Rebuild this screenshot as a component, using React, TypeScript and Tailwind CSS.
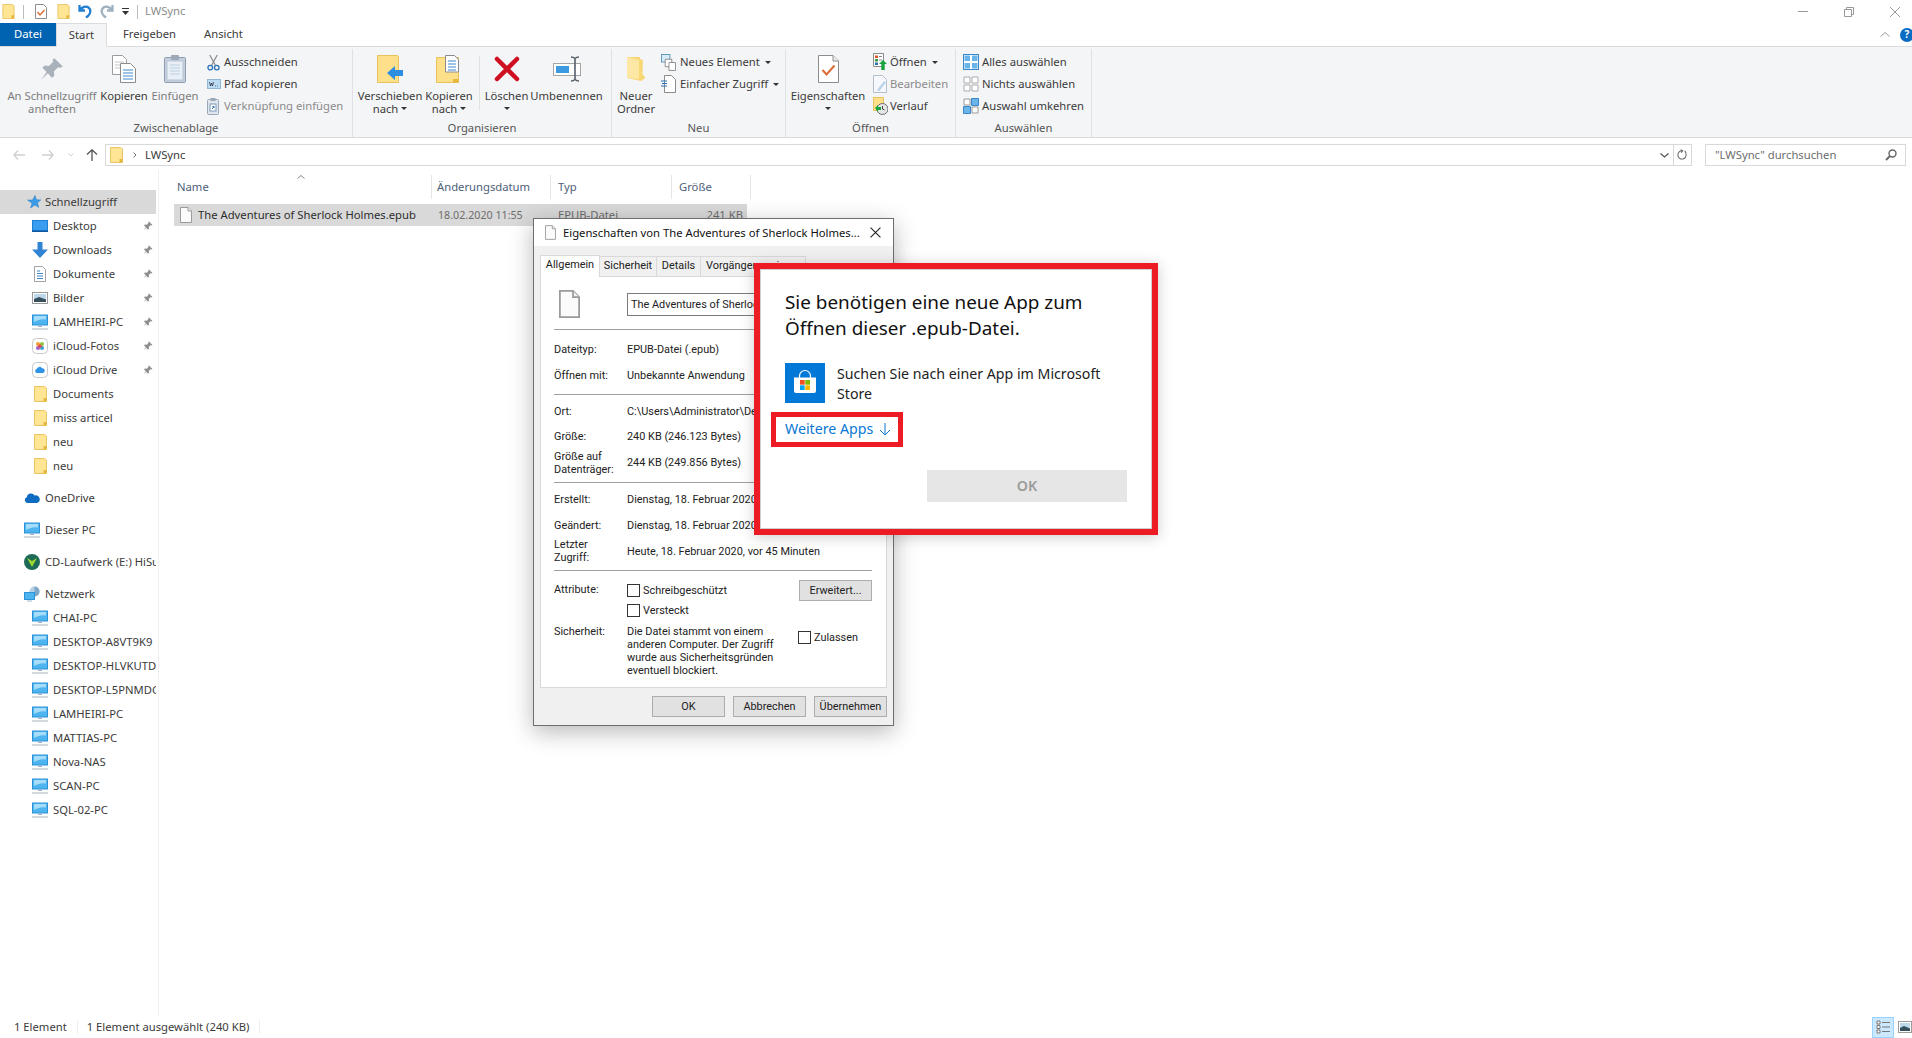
import type { ReactNode } from "react";

const ink = "text-[#3b3b3b]";

function Folder({ className = "w-[13px] h-[16px]" }: { className?: string }) {
  return (
    <svg viewBox="0 0 13 16" className={className}>
      <path d="M.5.5h10L12.5 2v13.5H.5z" fill="#ffe594" stroke="#eac566" />
      <path d="M9.5 15.5V12h3v3.5z" fill="#e6b73c" />
    </svg>
  );
}

function Sheet({ className = "w-[12px] h-[16px]" }: { className?: string }) {
  return (
    <svg viewBox="0 0 12 16" className={`shrink-0 ${className}`}>
      <path d="M.5.5h7.5l3.5 3.5v11.5H.5z" fill="#fbfbfb" stroke="#9b9b9b" />
      <path d="M8 .5V4h3.5" fill="#f1f1f1" stroke="#9b9b9b" />
    </svg>
  );
}

function Monitor() {
  return (
    <svg viewBox="0 0 16 16" className="w-4 h-4">
      <rect x=".5" y="1" width="15" height="10" fill="#4db4f0" stroke="#2c93d8" />
      <path d="M2 2h12v3.5C9 4.5 5 6.5 2 8z" fill="#a5dcfa" />
      <path d="M6 11.5h4v1.5H6z" fill="#9fb6c6" />
      <path d="M0 14.5h16v1H0z" fill="#a9b3bb" />
    </svg>
  );
}

function Pin({ className = "w-[10px] h-[10px]", color = "#8e8e8e" }: { className?: string; color?: string }) {
  return (
    <svg viewBox="0 0 20 20" className={className}>
      <path d="M12 1l7 7-2 1-2-.5-3.5 3.5.5 3.5-2 2-3.5-4L1 19l4.5-6.5L2 9l2-2 3.5.5L11 4l-.5-2z" fill={color} />
    </svg>
  );
}

function Star() {
  return (
    <svg viewBox="0 0 14 14" className="w-[14px] h-[14px]">
      <path d="M8 .5l1.5 4.2 4.3.2-3.3 2.9 1.2 4.6L8 10l-4.5 3 1.5-4.8L.5 5h5z" fill="#3a9be6" stroke="#2d7fc4" strokeWidth=".5" />
    </svg>
  );
}

function Cloud({ color = "#0f6cc0" }: { color?: string }) {
  return (
    <svg viewBox="0 0 16 10" className="w-4 h-[10px]">
      <path d="M3.5 10A3 3 0 0 1 2.8 4.2 4.2 4.2 0 0 1 10.6 2.6 3.7 3.7 0 0 1 13 10z" fill={color} />
    </svg>
  );
}

const sideIcons: Record<string, ReactNode> = {
  Desktop: (
    <svg viewBox="0 0 16 12" className="w-4 h-3">
      <rect width="16" height="12" fill="#1a7fd8" />
      <rect x="1" y="1" width="14" height="9" fill="#3b9df0" />
      <path d="M0 10.5h16V12H0z" fill="#0f5a9e" />
    </svg>
  ),
  Downloads: (
    <svg viewBox="0 0 16 16" className="w-4 h-4">
      <path d="M5.5 0h5v7.5H16L8 16 0 7.5h5.5z" fill="#2f85d4" />
    </svg>
  ),
  Dokumente: (
    <svg viewBox="0 0 12 16" className="w-3 h-4">
      <path d="M.5.5h8l3 3v12H.5z" fill="#fff" stroke="#a3a3a3" />
      <path d="M3 5h3M3 7.5h6M3 10h6M3 12.5h6" stroke="#3f86c8" />
    </svg>
  ),
  Bilder: (
    <svg viewBox="0 0 16 12" className="w-4 h-3">
      <rect x=".5" y=".5" width="15" height="11" fill="#fff" stroke="#9a9a9a" />
      <rect x="2" y="2" width="12" height="8" fill="#bcd9ea" />
      <path d="M2 7l5-2 7 2.5V10H2z" fill="#35505c" />
    </svg>
  ),
  "iCloud-Fotos": (
    <svg viewBox="0 0 16 16" className="w-4 h-4">
      <rect x=".5" y=".5" width="15" height="15" rx="4" fill="#fff" stroke="#c8c8c8" />
      <circle cx="6" cy="6" r="2" fill="#f0a030" />
      <circle cx="10" cy="6" r="2" fill="#8cc63f" />
      <circle cx="6" cy="10" r="2" fill="#a55fc9" />
      <circle cx="10" cy="10" r="2" fill="#3f9ad6" />
      <circle cx="8" cy="8" r="1.8" fill="#e4473f" />
    </svg>
  ),
  "iCloud Drive": (
    <svg viewBox="0 0 16 16" className="w-4 h-4">
      <rect x=".5" y=".5" width="15" height="15" rx="4" fill="#fff" stroke="#c8c8c8" />
      <path d="M5 11a2 2 0 0 1-.4-3.9A3 3 0 0 1 10 6.2 2.5 2.5 0 0 1 11.2 11z" fill="#2d93e8" />
    </svg>
  ),
};

const quickAccess = ["Desktop", "Downloads", "Dokumente", "Bilder", "LAMHEIRI-PC", "iCloud-Fotos", "iCloud Drive"];
const quickFolders = ["Documents", "miss articel", "neu", "neu"];
const network = ["CHAI-PC", "DESKTOP-A8VT9K9", "DESKTOP-HLVKUTD", "DESKTOP-L5PNMDG", "LAMHEIRI-PC", "MATTIAS-PC", "Nova-NAS", "SCAN-PC", "SQL-02-PC"];

function SideRow({ icon, label, pin, indent }: { icon: ReactNode; label: string; pin?: boolean; indent?: boolean }) {
  return (
    <div className={`flex h-6 items-center ${indent ? "pl-8" : "pl-6"}`}>
      <span className="flex w-4 shrink-0 justify-center">{icon}</span>
      <span className={`ml-[5px] min-w-0 flex-1 overflow-hidden whitespace-nowrap text-[11.25px] ${ink}`}>{label}</span>
      {pin && (
        <span className="mr-[3px] shrink-0">
          <Pin />
        </span>
      )}
    </div>
  );
}

function Caret({ className = "" }: { className?: string }) {
  return (
    <svg viewBox="0 0 6 3" className={`inline-block h-[3px] w-[6px] ${className}`}>
      <path d="M0 0h6L3 3z" fill="#333" />
    </svg>
  );
}

function LargeBtn({
  w,
  icon,
  lines,
  caret,
  muted,
}: {
  w: string;
  icon: ReactNode;
  lines: string[];
  caret?: boolean;
  muted?: boolean;
}) {
  return (
    <div className={`flex shrink-0 flex-col items-center ${w}`}>
      <div className="flex h-[40px] items-center justify-center">{icon}</div>
      <div className={`text-center text-[11.25px] leading-[13px] whitespace-nowrap ${muted ? "text-[#7c7c7c]" : ink}`}>
        {lines.map((l, i) => (
          <div key={i}>
            {l}
            {caret && lines.length > 1 && i === lines.length - 1 && <Caret className="mb-[2px] ml-[3px]" />}
          </div>
        ))}
        {caret && lines.length === 1 && (
          <div className="flex h-[13px] items-center justify-center">
            <Caret />
          </div>
        )}
      </div>
    </div>
  );
}

function SmallBtn({
  icon,
  label,
  box,
  muted,
  caret,
}: {
  icon: ReactNode;
  label: string;
  box: string;
  muted?: boolean;
  caret?: boolean;
}) {
  return (
    <div className="flex h-[22px] items-center">
      <span className={`flex shrink-0 justify-start ${box}`}>{icon}</span>
      <span className={`whitespace-nowrap text-[11.25px] ${muted ? "text-[#8b8b8b]" : ink}`}>{label}</span>
      {caret && <Caret className="ml-[5px]" />}
    </div>
  );
}

function Group({ w, label, children }: { w: string; label: string; children: ReactNode }) {
  return (
    <div className={`flex h-[88px] shrink-0 flex-col border-r border-[#dfe1e3] ${w}`}>
      <div className="flex h-[73px]">{children}</div>
      <div className="flex h-[13px] items-center justify-center text-[11.25px] text-[#555]">{label}</div>
    </div>
  );
}

function CopyPages() {
  return (
    <svg viewBox="0 0 24 28" className="h-[28px] w-[24px]">
      <path d="M.5.5h10l4 4v15H.5z" fill="#fff" stroke="#9c9c9c" />
      <path d="M3 7h9M3 10h9M3 13h9" stroke="#c2c2c2" />
      <path d="M8.5 8.5h10l5 5v14h-15z" fill="#fff" stroke="#8b8b8b" />
      <path d="M11 15h10M11 18h10M11 21h10M11 24h10" stroke="#3f86c8" />
    </svg>
  );
}

function StoreBag() {
  return (
    <svg viewBox="0 0 40 40" className="h-10 w-10 shrink-0">
      <rect width="40" height="40" fill="#0078d7" />
      <path d="M14.5 15v-2a5.500 5.500 0 0 1 11 0v2" fill="none" stroke="#fff" strokeWidth="1.200" />
      <path d="M9 14.500h22V28a2 2 0 0 1-2 2H11a2 2 0 0 1-2-2z" fill="#fff" />
      <rect x="15" y="17" width="4.700" height="4.700" fill="#f25022" />
      <rect x="20.300" y="17" width="4.700" height="4.700" fill="#7fba00" />
      <rect x="15" y="22.300" width="4.700" height="4.700" fill="#00a4ef" />
      <rect x="20.300" y="22.300" width="4.700" height="4.700" fill="#ffb900" />
    </svg>
  );
}

function Ribbon() {
  return (
    <div className="flex h-[92px] shrink-0 border-y border-[#dadbdc] bg-[#f4f5f7] pt-[2px]">
      <Group w="w-[353px]" label="Zwischenablage">
        <div className="w-[6px]" />
        <LargeBtn
          w="w-[92px]"
          muted
          lines={["An Schnellzugriff", "anheften"]}
          icon={<Pin className="h-[24px] w-[24px]" color="#a9b1bb" />}
        />
        <LargeBtn w="w-[52px]" lines={["Kopieren"]} icon={<CopyPages />} />
        <LargeBtn
          w="w-[50px]"
          muted
          lines={["Einfügen"]}
          icon={
            <svg viewBox="0 0 22 28" className="h-[28px] w-[22px]">
              <rect x=".5" y="2.500" width="21" height="25" rx="1" fill="#c3cfdc" stroke="#8d9cae" />
              <rect x="3" y="6" width="16" height="19" fill="#e8eff6" stroke="#b7c4d2" />
              <path d="M6 10h10M6 13h10M6 16h10M6 19h10" stroke="#bcd0e3" />
              <rect x="7" y="0" width="8" height="5" rx="1" fill="#9ca9b8" />
            </svg>
          }
        />
        <div className="ml-[7px] pt-[2px]">
          <SmallBtn
            box="w-[17px]"
            label="Ausschneiden"
            icon={
              <svg viewBox="0 0 14 18" className="h-[17px] w-[13px]">
                <path d="M3 1l6 11M11 1L5 12" stroke="#8a8a8a" strokeWidth="1.300" fill="none" />
                <circle cx="3.500" cy="14.500" r="2.500" fill="none" stroke="#2a72b5" strokeWidth="1.400" />
                <circle cx="10.500" cy="14.500" r="2.500" fill="none" stroke="#2a72b5" strokeWidth="1.400" />
              </svg>
            }
          />
          <SmallBtn
            box="w-[17px]"
            label="Pfad kopieren"
            icon={
              <svg viewBox="0 0 14 10" className="h-[10px] w-[14px]">
                <rect x=".5" y=".5" width="13" height="9" fill="#bcdcf3" stroke="#8fb8d8" />
                <path d="M2.500 3l1 4 1-3 1 3 1-4M8 7h.8M10 7h.8" stroke="#334" fill="none" strokeWidth=".8" />
              </svg>
            }
          />
          <SmallBtn
            box="w-[17px]"
            muted
            label="Verknüpfung einfügen"
            icon={
              <svg viewBox="0 0 12 17" className="h-[17px] w-[12px]">
                <rect x=".5" y="1.500" width="11" height="15" rx="1" fill="#dfe6ee" stroke="#9aa8b8" />
                <rect x="3.500" y="0" width="5" height="3" fill="#9aa8b8" />
                <rect x="3" y="6" width="6" height="7" fill="#fff" stroke="#7d98b5" />
                <path d="M5 11l2-2.500M5.500 8.500H7V10" stroke="#2a72b5" fill="none" />
              </svg>
            }
          />
        </div>
      </Group>

      <Group w="w-[259px]" label="Organisieren">
        <div className="w-[5px]" />
        <LargeBtn
          w="w-[64px]"
          caret
          lines={["Verschieben", "nach"]}
          icon={
            <svg viewBox="0 0 26 28" className="h-[28px] w-[26px]">
              <path d="M.5.5h20l1 1v26H.5z" fill="#ffe08a" stroke="#e9c25c" />
              <path d="M10 18l8-7v4h8v6h-8v4z" fill="#2b8ee0" />
            </svg>
          }
        />
        <div className="ml-[2px]">
          <LargeBtn
            w="w-[50px]"
            caret
            lines={["Kopieren", "nach"]}
            icon={
              <svg viewBox="0 0 26 28" className="h-[28px] w-[26px]">
                <path d="M.5 2.500h22v25H.5z" fill="#ffe08a" stroke="#e9c25c" />
                <path d="M9.500.5h9l4 4V17h-13z" fill="#fff" stroke="#8b8b8b" />
                <path d="M12 6h8M12 9h8M12 12h8M12 15h8" stroke="#3f86c8" />
                <path d="M17 27.500V24h5.500v3.500z" fill="#e6b73c" />
              </svg>
            }
          />
        </div>
        <div className="mt-[7px] ml-[5px] h-[54px] w-px bg-[#dfe1e3]" />
        <div className="ml-[6px]">
          <LargeBtn
            w="w-[41px]"
            caret
            lines={["Löschen"]}
            icon={
              <svg viewBox="0 0 26 26" className="h-[26px] w-[26px]">
                <path d="M3 3l20 20M23 3L3 23" stroke="#cf1020" strokeWidth="4.500" strokeLinecap="round" />
              </svg>
            }
          />
        </div>
        <div className="ml-[5px]">
          <LargeBtn
            w="w-[69px]"
            lines={["Umbenennen"]}
            icon={
              <svg viewBox="0 0 28 26" className="h-[26px] w-[28px]">
                <rect x=".5" y="7.500" width="27" height="12" fill="#fff" stroke="#a5a5a5" />
                <rect x="3" y="10" width="13" height="7" fill="#3d9ae0" />
                <path d="M18 1c2 0 3 .5 4 1.500 1-1 2-1.500 4-1.500M22 2.500v21M18 25c2 0 3-.5 4-1.500 1 1 2 1.500 4 1.500" fill="none" stroke="#55606b" strokeWidth="1.600" />
              </svg>
            }
          />
        </div>
      </Group>

      <Group w="w-[174px]" label="Neu">
        <LargeBtn
          w="w-[48px]"
          lines={["Neuer", "Ordner"]}
          icon={
            <svg viewBox="0 0 20 26" className="h-[26px] w-[20px]">
              <path d="M1 1h13v2l3 1-.5 14 3 4-4.500 3L1 22z" fill="#f8d775" />
              <path d="M1 1l12 3v19L1 22z" fill="#fde7a4" />
            </svg>
          }
        />
        <div className="ml-[1px] pt-[2px]">
          <SmallBtn
            box="w-[19px]"
            caret
            label="Neues Element"
            icon={
              <svg viewBox="0 0 16 18" className="h-[17px] w-[15px]">
                <rect x=".5" y=".5" width="9" height="8" fill="#d8ecf8" stroke="#5a93bb" />
                <path d="M4.500 5.500h7v8h-7z" fill="#fff" stroke="#8b8b8b" />
                <path d="M8.500 9h7v8.500h-7z" fill="#fff" stroke="#8b8b8b" />
              </svg>
            }
          />
          <SmallBtn
            box="w-[19px]"
            caret
            label="Einfacher Zugriff"
            icon={
              <svg viewBox="0 0 15 18" className="h-[18px] w-[15px]">
                <path d="M3.500.5h7l4 4v13h-11z" fill="#fff" stroke="#8b8b8b" />
                <path d="M0 6h6M1 8.500h5M0 11h6" stroke="#2a72b5" />
              </svg>
            }
          />
        </div>
      </Group>

      <Group w="w-[170px]" label="Öffnen">
        <div className="w-[6px]" />
        <LargeBtn
          w="w-[72px]"
          caret
          lines={["Eigenschaften"]}
          icon={
            <svg viewBox="0 0 21 28" className="h-[28px] w-[21px]">
              <path d="M.5.500h14.500l5.500 5.500v21.500H.5z" fill="#fff" stroke="#8d8d8d" />
              <path d="M15 .5V6h5.500" fill="#eee" stroke="#8d8d8d" />
              <path d="M4.500 15l4 4.500 8-9" fill="none" stroke="#dd6b34" strokeWidth="2" />
            </svg>
          }
        />
        <div className="ml-[9px] pt-[2px]">
          <SmallBtn
            box="w-[17px]"
            caret
            label="Öffnen"
            icon={
              <svg viewBox="0 0 14 18" className="h-[18px] w-[14px]">
                <path d="M.5.5h10v13H.5z" fill="#fff" stroke="#8b8b8b" />
                <rect x="2" y="2.500" width="3" height="2.500" fill="#d9532c" />
                <rect x="2" y="6" width="3" height="2.500" fill="#3f9a3f" />
                <rect x="2" y="9.500" width="3" height="2.500" fill="#2a72b5" />
                <path d="M6 3.500h3M6 7h3" stroke="#888" />
                <path d="M10 7l4 4h-2.300v6H8.300v-6H6z" fill="#19a33e" />
              </svg>
            }
          />
          <SmallBtn
            box="w-[17px]"
            muted
            label="Bearbeiten"
            icon={
              <svg viewBox="0 0 14 18" className="h-[18px] w-[14px]">
                <path d="M.5.5h9l4 4v13H.5z" fill="#f6f8fb" stroke="#b3bfcc" />
                <path d="M4 15l7-9 2 1.500-7 9z" fill="#bcd4ea" />
              </svg>
            }
          />
          <SmallBtn
            box="w-[17px]"
            label="Verlauf"
            icon={
              <svg viewBox="0 0 15 18" className="h-[18px] w-[15px]">
                <path d="M.5.5h10v13H.5z" fill="#ffe08a" stroke="#e9c25c" />
                <circle cx="9.500" cy="12" r="5.500" fill="#e6e6e6" stroke="#6b6b6b" />
                <path d="M9.500 9v3l2 1" stroke="#444" fill="none" />
                <path d="M2 11l3-3v2h3v3H5v2z" fill="#19a33e" />
              </svg>
            }
          />
        </div>
      </Group>

      <Group w="w-[136px]" label="Auswählen">
        <div className="ml-[7px] pt-[2px]">
          <SmallBtn
            box="w-[19px]"
            label="Alles auswählen"
            icon={
              <svg viewBox="0 0 16 16" className="h-4 w-4">
                <rect x=".5" y=".5" width="15" height="15" fill="#fff" stroke="#3a86c8" />
                <path d="M1.500 1.500h5.500v5.500H1.500zM9 1.500h5.500v5.500H9zM1.500 9h5.500v5.500H1.500zM9 9h5.500v5.500H9z" fill="#69b5ea" />
              </svg>
            }
          />
          <SmallBtn
            box="w-[19px]"
            label="Nichts auswählen"
            icon={
              <svg viewBox="0 0 16 16" className="h-4 w-4">
                <path d="M1 1h6v6H1zM9 1h6v6H9zM1 9h6v6H1zM9 9h6v6H9z" fill="#fff" stroke="#adadad" />
              </svg>
            }
          />
          <SmallBtn
            box="w-[19px]"
            label="Auswahl umkehren"
            icon={
              <svg viewBox="0 0 16 16" className="h-4 w-4">
                <path d="M1 1h6v6H1zM9 9h6v6H9z" fill="#fff" stroke="#9a9a9a" />
                <path d="M8.500.5h7v7h-7zM.5 8.500h7v7h-7z" fill="#69b5ea" stroke="#3a86c8" />
              </svg>
            }
          />
        </div>
      </Group>
    </div>
  );
}

function TopBars() {
  return (
    <>
      <div className="flex h-[23px] shrink-0 items-center">
        <div className="ml-[2px]">
          <Folder className="h-[15px] w-[13px]" />
        </div>
        <div className="ml-[8px] h-[14px] w-px bg-[#bdbdbd]" />
        <svg viewBox="0 0 12 15" className="ml-[11px] h-[15px] w-[12px]">
          <path d="M.5.500h8l3 3v11H.5z" fill="#fff" stroke="#8d8d8d" />
          <path d="M2.500 8l2.500 3 4.500-5" fill="none" stroke="#dd6b34" strokeWidth="1.400" />
        </svg>
        <div className="ml-[10px]">
          <Folder className="h-[15px] w-[13px]" />
        </div>
        <svg viewBox="0 0 14 15" className="ml-[8px] h-[15px] w-[14px]">
          <path d="M1.500 1v5.500H7M1.500 6.500C4 3 8 1.500 10.500 3.500s2.500 6-.5 8.500l-2 1.500" fill="none" stroke="#1f7fd0" strokeWidth="2.300" />
        </svg>
        <svg viewBox="0 0 14 15" className="ml-[8px] h-[15px] w-[14px]">
          <path d="M12.500 1v5.500H7M12.500 6.500C10 3 6 1.500 3.500 3.500S1 9.500 4 12l2 1.500" fill="none" stroke="#9fb0bf" strokeWidth="2.300" />
        </svg>
        <svg viewBox="0 0 7 7" className="ml-[8px] h-[7px] w-[7px]">
          <path d="M0 0h7v1H0zM0 3h7L3.500 7z" fill="#333" />
        </svg>
        <div className="ml-[8px] h-[14px] w-px bg-[#bdbdbd]" />
        <span className="ml-[7px] text-[11.25px] text-[#8c8c8c]">LWSync</span>
        <div className="mr-[12px] ml-auto flex items-center">
          <svg viewBox="0 0 10 1" className="h-px w-[10px]">
            <rect width="10" height="1" fill="#999" />
          </svg>
          <svg viewBox="0 0 10 10" className="ml-[36px] h-[10px] w-[10px]">
            <path d="M.5 2.500h7v7h-7zM2.500 2.500v-2h7v7h-2" fill="none" stroke="#999" />
          </svg>
          <svg viewBox="0 0 10 10" className="ml-[36px] h-[10px] w-[10px]">
            <path d="M0 0l10 10M10 0L0 10" stroke="#999" />
          </svg>
        </div>
      </div>
      <div className="flex h-[23px] shrink-0 items-stretch text-[11.25px]">
        <div className="flex w-[56px] items-center justify-center bg-[#0063b1] text-white">Datei</div>
        <div className={`relative z-10 -mb-px flex w-[51px] items-center justify-center border-x border-t border-[#dadbdc] bg-[#f4f5f7] ${ink}`}>Start</div>
        <div className={`flex items-center pl-[16px] ${ink}`}>Freigeben</div>
        <div className={`ml-[28px] flex items-center ${ink}`}>Ansicht</div>
        <div className="ml-auto flex items-center">
          <svg viewBox="0 0 10 5" className="h-[5px] w-[10px]">
            <path d="M.5 4.500L5 .5l4.500 4" fill="none" stroke="#999" />
          </svg>
          <span className="-mr-[2px] ml-[10px] flex h-[14px] w-[14px] items-center justify-center rounded-full bg-[#0b6cc4] text-[10px] font-bold text-white">?</span>
        </div>
      </div>
    </>
  );
}

function AddressBar() {
  return (
    <div className="flex h-[32px] shrink-0 items-center pt-[2px]">
      <svg viewBox="0 0 12 10" className="ml-[13px] h-[10px] w-[12px]">
        <path d="M5 .5L.8 5 5 9.500M1 5h11" fill="none" stroke="#cfcfcf" strokeWidth="1.300" />
      </svg>
      <svg viewBox="0 0 12 10" className="ml-[17px] h-[10px] w-[12px]">
        <path d="M7 .5L11.200 5 7 9.500M11 5H0" fill="none" stroke="#cfcfcf" strokeWidth="1.300" />
      </svg>
      <svg viewBox="0 0 6 4" className="ml-[14px] h-[4px] w-[6px]">
        <path d="M.5.5L3 3 5.500.5" fill="none" stroke="#cfcfcf" />
      </svg>
      <svg viewBox="0 0 12 12" className="ml-[12px] h-[12px] w-[12px]">
        <path d="M1 5.500L6 .8l5 4.700M6 1v11" fill="none" stroke="#555" strokeWidth="1.300" />
      </svg>
      <div className="ml-[7px] flex h-[22px] w-[1587px] items-center border border-[#d9d9d9]">
        <div className="ml-[4px]">
          <Folder className="h-[16px] w-[13px]" />
        </div>
        <svg viewBox="0 0 4 6" className="ml-[10px] h-[6px] w-[4px]">
          <path d="M.5.5L3 3 .5 5.500" fill="none" stroke="#777" />
        </svg>
        <span className={`ml-[8px] text-[11.25px] ${ink}`}>LWSync</span>
        <svg viewBox="0 0 9 5" className="ml-auto h-[5px] w-[9px]">
          <path d="M.5.500L4.500 4 8.500.5" fill="none" stroke="#555" strokeWidth="1.300" />
        </svg>
        <div className="ml-[4px] h-full w-px bg-[#d9d9d9]" />
        <svg viewBox="0 0 12 12" className="mx-[3px] h-[12px] w-[11px]">
          <path d="M9.500 4A4.500 4.500 0 1 1 6 1.500M4 .2L6.200 1.500 4.500 3.500M8.500 1.500L10 4" fill="none" stroke="#666" strokeWidth="1.100" />
        </svg>
      </div>
      <div className="ml-[13px] flex h-[22px] w-[201px] items-center border border-[#d9d9d9] pl-[9px]">
        <span className="text-[11.25px] text-[#6d6d6d]">"LWSync" durchsuchen</span>
        <svg viewBox="0 0 12 12" className="mr-[8px] ml-auto h-[12px] w-[12px]">
          <circle cx="7.500" cy="4.500" r="3.500" fill="none" stroke="#666" strokeWidth="1.400" />
          <path d="M5 7L1 11" stroke="#666" strokeWidth="1.800" />
        </svg>
      </div>
    </div>
  );
}

function Sidebar() {
  return (
    <div className="flex w-[159px] shrink-0 flex-col border-r border-[#f0f0f0] pt-[20px]">
      <div className="w-[156px] overflow-hidden">
        <div className="flex h-6 items-center bg-[#d9d9d9] pl-[27px]">
          <Star />
          <span className={`ml-[4px] text-[11.25px] ${ink}`}>Schnellzugriff</span>
        </div>
        {quickAccess.map((n) => (
          <SideRow key={n} indent pin label={n} icon={sideIcons[n] ?? <Monitor />} />
        ))}
        {quickFolders.map((n, i) => (
          <SideRow key={i} indent label={n} icon={<Folder className="h-[16px] w-[13px]" />} />
        ))}
        <div className="mt-2">
          <SideRow label="OneDrive" icon={<Cloud />} />
        </div>
        <div className="mt-2">
          <SideRow label="Dieser PC" icon={<Monitor />} />
        </div>
        <div className="mt-2">
          <SideRow
            label="CD-Laufwerk (E:) HiSuite"
            icon={
              <svg viewBox="0 0 16 16" className="h-4 w-4">
                <circle cx="8" cy="8" r="8" fill="#1d6b57" />
                <path d="M3 4l5 3 5-3-5 9z" fill="#9bd62f" />
              </svg>
            }
          />
        </div>
        <div className="mt-2">
          <SideRow
            label="Netzwerk"
            icon={
              <svg viewBox="0 0 16 16" className="h-4 w-4">
                <circle cx="10.500" cy="5.500" r="5" fill="#b7cfe2" />
                <path d="M10.500.5a5 5 0 0 1 0 10z" fill="#7ea6c7" />
                <rect x=".5" y="6.500" width="10" height="7" fill="#4db4f0" stroke="#2c93d8" />
                <path d="M3 14.500h5v1H3z" fill="#9fb6c6" />
              </svg>
            }
          />
        </div>
        {network.map((n) => (
          <SideRow key={n} indent label={n} icon={<Monitor />} />
        ))}
      </div>
    </div>
  );
}

function FileList() {
  return (
    <div className="flex-1 pt-[4px] pl-[15px]">
      <div className="flex h-[24px] items-center pt-[2px] text-[11.25px] text-[#4c607a]">
        <div className="relative flex h-[24px] w-[258px] items-center border-r border-[#e5e5e5] pl-[3px]">
          Name
          <svg viewBox="0 0 8 4" className="absolute top-0 left-[123px] h-[4px] w-[8px]">
            <path d="M.5 3.500L4 .5l3.500 3" fill="none" stroke="#888" />
          </svg>
        </div>
        <div className="flex h-[24px] w-[119px] items-center border-r border-[#e5e5e5] pl-[5px]">Änderungsdatum</div>
        <div className="flex h-[24px] w-[121px] items-center border-r border-[#e5e5e5] pl-[7px]">Typ</div>
        <div className="flex h-[24px] w-[79px] items-center border-r border-[#e5e5e5] pl-[7px]">Größe</div>
      </div>
      <div className="mt-[6px] flex h-[22px] w-[573px] items-center bg-[#d9d9d9] text-[11.25px]">
        <div className="flex w-[258px] items-center pl-[6px]">
          <Sheet />
          <span className="ml-[6px] whitespace-nowrap text-[#2d2d2d]">The Adventures of Sherlock Holmes.epub</span>
        </div>
        <div className="w-[120px] pl-[6px] text-[10.7px] text-[#6d6d6d]">18.02.2020 11:55</div>
        <div className="w-[120px] pl-[6px] text-[#6d6d6d]">EPUB-Datei</div>
        <div className="w-[73px] pr-[2px] text-right text-[#6d6d6d]">241 KB</div>
      </div>
    </div>
  );
}

function PropRow({ label, value, h }: { label: ReactNode; value: ReactNode; h: string }) {
  return (
    <div className={`flex items-center ${h}`}>
      <div className="w-[73px] shrink-0 leading-[13px]">{label}</div>
      <div className="whitespace-nowrap">{value}</div>
    </div>
  );
}

function Rule({ className }: { className: string }) {
  return <div className={`h-px bg-[#a0a0a0] ${className}`} />;
}

function Box({ className = "" }: { className?: string }) {
  return <span className={`block h-[13px] w-[13px] shrink-0 border border-[#333] bg-white ${className}`} />;
}

function DlgButton({ label, w }: { label: string; w: string }) {
  return <div className={`flex h-[21px] items-center justify-center border border-[#adadad] bg-[#e1e1e1] text-[#222] ${w}`}>{label}</div>;
}

function PropertiesDialog() {
  return (
    <div className="absolute top-[218px] left-[533px] flex h-[508px] w-[361px] flex-col border border-[#6e6e6e] bg-[#f0f0f0] text-[10.9px] leading-[13px] text-[#222] shadow-[0_6px_22px_rgba(0,0,0,0.28)] [font-family:Roboto,sans-serif]">
      <div className="flex h-[27px] shrink-0 items-center bg-white pl-[11px] text-[11.25px] [font-family:'Noto_Sans',sans-serif]">
        <Sheet className="h-[15px] w-[11px]" />
        <span className="ml-[7px] whitespace-nowrap text-[#111]">Eigenschaften von The Adventures of Sherlock Holmes...</span>
        <svg viewBox="0 0 10 10" className="mr-[12px] ml-auto h-[11px] w-[11px] shrink-0">
          <path d="M.5.500l9 9M9.500.5l-9 9" stroke="#222" strokeWidth="1" />
        </svg>
      </div>
      <div className="flex h-[30px] shrink-0 items-end pl-[6px]">
        <div className="relative z-10 -mb-px flex h-[22px] w-[60px] items-center justify-center border-x border-t border-[#d9d9d9] bg-white pb-[4px]">Allgemein</div>
        <div className="flex h-[20px] w-[57px] items-center justify-center border-t border-r border-[#d9d9d9] pb-[2px]">Sicherheit</div>
        <div className="flex h-[20px] w-[44px] items-center justify-center border-t border-r border-[#d9d9d9] pb-[2px]">Details</div>
        <div className="flex h-[20px] w-[105px] items-center border-t border-r border-[#d9d9d9] pb-[2px] pl-[5px]">Vorgängerversionen</div>
      </div>
      <div className="mx-[6px] h-[412px] shrink-0 border border-[#d9d9d9] bg-white pt-[13px] pr-[14px] pl-[13px]">
        <div className="flex h-[28px] items-center">
          <div className="ml-[5px] w-[68px]">
            <Sheet className="h-[28px] w-[21px]" />
          </div>
          <div className="flex h-[23px] w-[240px] items-center overflow-hidden border border-[#7a7a7a] pl-[3px] whitespace-nowrap">The Adventures of Sherlock Holmes.epub</div>
        </div>
        <Rule className="mt-[11px]" />
        <div className="mt-[6px]">
          <PropRow h="h-[26px]" label="Dateityp:" value="EPUB-Datei (.epub)" />
          <PropRow h="h-[26px]" label="Öffnen mit:" value="Unbekannte Anwendung" />
        </div>
        <Rule className="mt-[6px]" />
        <div className="mt-[3px]">
          <PropRow h="h-[26px]" label="Ort:" value="C:\Users\Administrator\Desktop\LWSync" />
          <PropRow h="h-[25px]" label="Größe:" value="240 KB (246.123 Bytes)" />
          <PropRow h="h-[27px]" label={<>Größe auf<br />Datenträger:</>} value="244 KB (249.856 Bytes)" />
        </div>
        <Rule className="mt-[6px]" />
        <div className="mt-[3px]">
          <PropRow h="h-[26px]" label="Erstellt:" value="Dienstag, 18. Februar 2020, 11:55:11" />
          <PropRow h="h-[26px]" label="Geändert:" value="Dienstag, 18. Februar 2020, 11:55:11" />
          <PropRow h="h-[26px]" label={<>Letzter<br />Zugriff:</>} value="Heute, 18. Februar 2020, vor 45 Minuten" />
        </div>
        <Rule className="mt-[6px]" />
        <div className="mt-[9px] flex">
          <div className="w-[73px] shrink-0 pt-[3px]">Attribute:</div>
          <div className="w-[172px]">
            <div className="flex h-[19px] items-center pt-[2px]">
              <Box />
              <span className="ml-[3px]">Schreibgeschützt</span>
            </div>
            <div className="mt-[1px] flex h-[19px] items-center pt-[2px]">
              <Box />
              <span className="ml-[3px]">Versteckt</span>
            </div>
          </div>
          <div className="flex h-[21px] w-[73px] items-center justify-center border border-[#adadad] bg-[#e1e1e1]">Erweitert...</div>
        </div>
        <div className="mt-[5px] flex">
          <div className="w-[73px] shrink-0 pt-[1px]">Sicherheit:</div>
          <div className="w-[171px] pt-[1px] whitespace-nowrap">
            Die Datei stammt von einem
            <br />
            anderen Computer. Der Zugriff
            <br />
            wurde aus Sicherheitsgründen
            <br />
            eventuell blockiert.
          </div>
          <div className="mt-[7px] flex h-[13px] items-center">
            <Box />
            <span className="ml-[3px]">Zulassen</span>
          </div>
        </div>
      </div>
      <div className="mt-[8px] flex justify-end gap-[8px] pr-[6px]">
        <DlgButton label="OK" w="w-[73px]" />
        <DlgButton label="Abbrechen" w="w-[73px]" />
        <DlgButton label="Übernehmen" w="w-[73px]" />
      </div>
    </div>
  );
}

function OpenWithPopup() {
  return (
    <div className="absolute top-[263px] left-[754px] h-[272px] w-[404px] border-[6px] border-[#ed1c24] bg-white shadow-[0_2px_14px_rgba(0,0,0,0.2)]">
      <div className="flex h-full flex-col border border-[#cfcfcf] pt-[19px] pr-[24px] pl-[24px]">
        <div className="text-[18.9px] leading-[26px] text-[#111]">
          Sie benötigen eine neue App zum
          <br />
          Öffnen dieser .epub-Datei.
        </div>
        <div className="mt-[22px] flex gap-[12px]">
          <StoreBag />
          <div className="pt-[1px] text-[14.2px] leading-[20px] text-[#222]">
            Suchen Sie nach einer App im Microsoft
            <br />
            Store
          </div>
        </div>
        <div className="mt-[15px] flex h-[20px] items-center text-[14.2px] text-[#0a78d4]">
          Weitere Apps
          <svg viewBox="0 0 12 13" className="ml-[6px] h-[13px] w-[12px]">
            <path d="M6 0v12M1 7l5 5 5-5" fill="none" stroke="#0a78d4" strokeWidth="1" />
          </svg>
        </div>
        <div className="mt-[31px] flex h-[32px] w-[200px] items-center justify-center self-end bg-[#e6e6e6] text-[14.2px] font-semibold text-[#9a9a9a]">OK</div>
      </div>
    </div>
  );
}

export default function App() {
  return (
    <div className="relative flex h-[1038px] w-[1912px] flex-col overflow-hidden bg-white [font-family:'Noto_Sans',sans-serif]">
      <TopBars />
      <Ribbon />
      <AddressBar />
      <div className="flex min-h-0 flex-1">
        <Sidebar />
        <FileList />
      </div>
      <div className={`flex h-[22px] shrink-0 items-center pl-[14px] text-[11.25px] ${ink}`}>
        <span>1 Element</span>
        <div className="ml-[10px] h-[14px] w-px bg-[#eeeeee]" />
        <span className="ml-[9px]">1 Element ausgewählt (240 KB)</span>
        <div className="ml-[10px] h-[14px] w-px bg-[#eeeeee]" />
        <div className="ml-auto flex items-center">
          <div className="flex h-[21px] w-[22px] items-center justify-center border border-[#99d1ff] bg-[#cce8ff]">
            <svg viewBox="0 0 14 14" className="h-[14px] w-[14px]">
              <path d="M1 1h3v3H1zM1 5.500h3v3H1zM1 10h3v3H1z" fill="#fff" stroke="#777" />
              <path d="M6 2.500h8M6 7h8M6 11.500h8" stroke="#777" />
            </svg>
          </div>
          <svg viewBox="0 0 14 12" className="ml-[4px] h-[12px] w-[14px]">
            <rect x=".5" y=".5" width="13" height="11" fill="#fff" stroke="#9a9a9a" />
            <rect x="2" y="2" width="10" height="8" fill="#bcd9ea" />
            <path d="M2 7l4-2 6 2.500V10H2z" fill="#35505c" />
          </svg>
        </div>
      </div>
      <PropertiesDialog />
      <OpenWithPopup />
      <div className="absolute top-[412px] left-[771px] h-[35px] w-[132px] border-[5px] border-[#ed1c24]" />
    </div>
  );
}
